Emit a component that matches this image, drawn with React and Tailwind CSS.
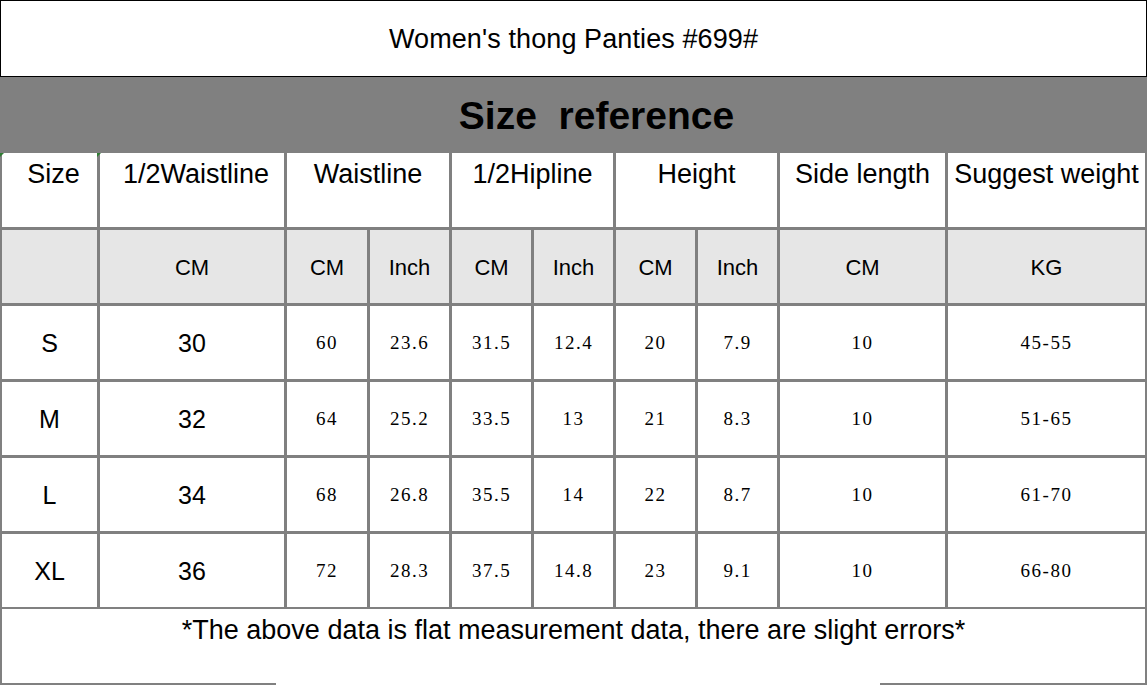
const sans = { fontFamily: '"Liberation Sans", Arial, sans-serif' };

const rows = [
  ["S", "30", "60", "23.6", "31.5", "12.4", "20", "7.9", "10", "45-55"],
  ["M", "32", "64", "25.2", "33.5", "13", "21", "8.3", "10", "51-65"],
  ["L", "34", "68", "26.8", "35.5", "14", "22", "8.7", "10", "61-70"],
  ["XL", "36", "72", "28.3", "37.5", "14.8", "23", "9.1", "10", "66-80"],
];

const units = ["", "CM", "CM", "Inch", "CM", "Inch", "CM", "Inch", "CM", "KG"];

function Corner({ className }) {
  return (
    <span
      className={`absolute top-0 w-0 h-0 border-t-[4px] border-r-[4px] border-t-[#2e7d32] border-r-transparent ${className}`}
    />
  );
}

function HeadCell({ children, span, corner, shift }) {
  return (
    <div
      className={`relative bg-white flex justify-center pt-[6px] text-[27px] leading-[30px] text-black whitespace-nowrap ${
        span ? "col-span-2" : ""
      } ${shift || ""}`}
    >
      {corner && <Corner className={corner} />}
      {children}
    </div>
  );
}

export default function App() {
  return (
    <div
      className="w-[1147px] h-[685px] bg-white flex flex-col overflow-hidden"
      style={sans}
    >
      <div className="h-[77px] border border-black flex items-center justify-center pt-[2px] text-[27px] text-black tracking-[0.1px]">
        Women's thong Panties #699#
      </div>

      <div className="h-[76px] bg-[#808080] flex items-center justify-center pl-[46px] pt-[2px] text-[39px] font-bold text-black whitespace-pre">
        Size  reference
      </div>

      <div className="grid grid-cols-[95px_184px_80px_79px_79px_79px_79px_79px_165px_197px] grid-rows-[74px_73px_73px_73px_73px_73px] gap-[3px] bg-[#808080] px-[2px] pb-[3px]">
        <HeadCell corner="-left-[2px]" shift="pl-[8px]">Size</HeadCell>
        <HeadCell corner="-left-[3px]" shift="pl-[8px]">1/2Waistline</HeadCell>
        <HeadCell span>Waistline</HeadCell>
        <HeadCell span>1/2Hipline</HeadCell>
        <HeadCell span>Height</HeadCell>
        <HeadCell>Side length</HeadCell>
        <HeadCell>Suggest weight</HeadCell>

        {units.map((u, i) => (
          <div
            key={i}
            className="bg-[#e6e6e6] flex items-center justify-center pt-[2px] text-[22px] text-black"
          >
            {u}
          </div>
        ))}

        {rows.map((r) =>
          r.map((v, i) => (
            <div
              key={r[0] + i}
              className={`bg-white flex items-center justify-center pt-[2px] text-black ${
                i < 2
                  ? "text-[25px]"
                  : "text-[19px] tracking-[1.5px] text-[#222]"
              }`}
              style={
                i < 2
                  ? undefined
                  : { fontFamily: '"Liberation Serif", "Times New Roman", serif' }
              }
            >
              {v}
            </div>
          ))
        )}
      </div>

      <div className="flex-1 flex flex-col bg-white border-x-2 border-[#808080] -mt-[1px]">
        <div className="flex-1 flex justify-center pt-[6px] text-[27px] leading-[30px] text-black">
          *The above data is flat measurement data, there are slight errors*
        </div>
        <div className="flex justify-between -mx-[2px]">
          <div className="w-[276px] h-[2px] bg-[#808080]" />
          <div className="w-[267px] h-[2px] bg-[#808080]" />
        </div>
      </div>
    </div>
  );
}
